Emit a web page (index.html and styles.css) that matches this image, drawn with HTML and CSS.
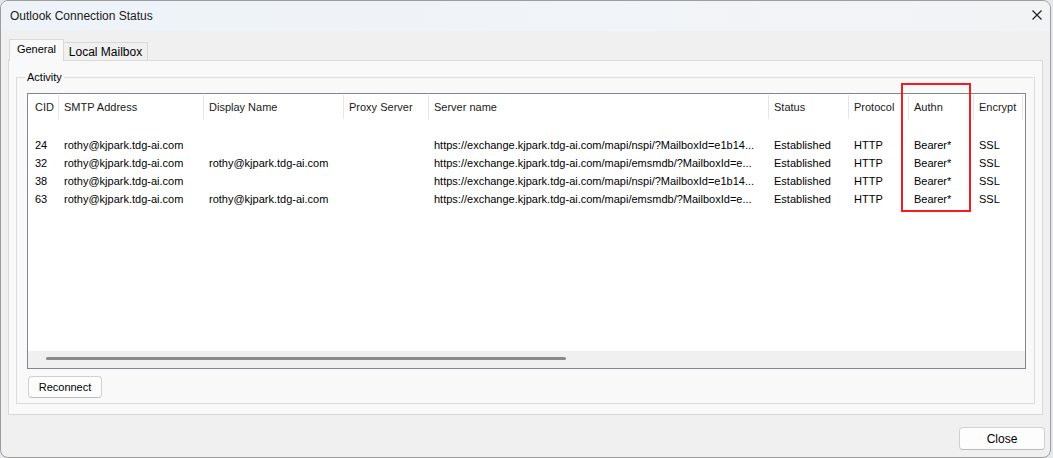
FILE: index.html
```html
<!DOCTYPE html>
<html>
<head>
<meta charset="utf-8">
<title>Outlook Connection Status</title>
<link rel="stylesheet" href="styles.css">
</head>
<body>
<div class="window">
  <div class="titlebar">
    <span class="title">Outlook Connection Status</span>
    <svg class="close-x" width="10" height="10" viewBox="0 0 10 10"><path d="M0.5 0.5 L9.5 9.5 M9.5 0.5 L0.5 9.5" stroke="#1b1b1b" stroke-width="1.1" fill="none"/></svg>
  </div>
  <div class="content">
    <div class="tabs">
      <div class="tab active">General</div>
      <div class="tab">Local Mailbox</div>
    </div>
    <div class="panel">
      <fieldset class="group">
        <legend class="legend">Activity</legend>
        <div class="listview">
          <div class="lv-row lv-header">
            <div class="hc first">CID</div>
            <div class="hc">SMTP Address</div>
            <div class="hc">Display Name</div>
            <div class="hc">Proxy Server</div>
            <div class="hc">Server name</div>
            <div class="hc">Status</div>
            <div class="hc">Protocol</div>
            <div class="hc">Authn</div>
            <div class="hc">Encrypt</div>
          </div>
          <div class="lv-body">
            <div class="lv-row item">
              <div class="c first">24</div>
              <div class="c">rothy@kjpark.tdg-ai.com</div>
              <div class="c"></div>
              <div class="c"></div>
              <div class="c">https://exchange.kjpark.tdg-ai.com/mapi/nspi/?MailboxId=e1b14...</div>
              <div class="c">Established</div>
              <div class="c">HTTP</div>
              <div class="c">Bearer*</div>
              <div class="c">SSL</div>
            </div>
            <div class="lv-row item">
              <div class="c first">32</div>
              <div class="c">rothy@kjpark.tdg-ai.com</div>
              <div class="c">rothy@kjpark.tdg-ai.com</div>
              <div class="c"></div>
              <div class="c">https://exchange.kjpark.tdg-ai.com/mapi/emsmdb/?MailboxId=e...</div>
              <div class="c">Established</div>
              <div class="c">HTTP</div>
              <div class="c">Bearer*</div>
              <div class="c">SSL</div>
            </div>
            <div class="lv-row item">
              <div class="c first">38</div>
              <div class="c">rothy@kjpark.tdg-ai.com</div>
              <div class="c"></div>
              <div class="c"></div>
              <div class="c">https://exchange.kjpark.tdg-ai.com/mapi/nspi/?MailboxId=e1b14...</div>
              <div class="c">Established</div>
              <div class="c">HTTP</div>
              <div class="c">Bearer*</div>
              <div class="c">SSL</div>
            </div>
            <div class="lv-row item">
              <div class="c first">63</div>
              <div class="c">rothy@kjpark.tdg-ai.com</div>
              <div class="c">rothy@kjpark.tdg-ai.com</div>
              <div class="c"></div>
              <div class="c">https://exchange.kjpark.tdg-ai.com/mapi/emsmdb/?MailboxId=e...</div>
              <div class="c">Established</div>
              <div class="c">HTTP</div>
              <div class="c">Bearer*</div>
              <div class="c">SSL</div>
            </div>
          </div>
          <div class="hscroll"><div class="thumb"></div></div>
        </div>
        <button class="btn reconnect">Reconnect</button>
      </fieldset>
    </div>
    <div class="footer">
      <button class="btn close">Close</button>
    </div>
  </div>
</div>
<div class="highlight"></div>
</body>
</html>
```
FILE: styles.css
```css
* { box-sizing: border-box; }
html, body { margin: 0; padding: 0; }
body {
  width: 1053px;
  height: 458px;
  background: #e6e8eb;
  font-family: "Liberation Sans", Arial, sans-serif;
  font-size: 11px;
  color: #000;
  overflow: hidden;
}
.window {
  width: 1051px;
  height: 458px;
  border: 1px solid #9d9d9d;
  border-radius: 8px;
  background: #f0f0f0;
  display: flex;
  flex-direction: column;
  overflow: hidden;
}
.titlebar {
  height: 30px;
  flex: none;
  display: flex;
  align-items: center;
  justify-content: space-between;
  padding: 0 8px 0 9px;
  background: linear-gradient(90deg, #edf3f9 0%, #f1f4f8 60%, #f2f3f5 100%);
}
.title {
  font-size: 12px;
  color: #1a1a1a;
  line-height: 14px;
  margin-top: -1px;
}
.close-x { display: block; margin-top: -2px; }
.content {
  flex: 1;
  display: flex;
  flex-direction: column;
  padding: 8px 7px 0 7px;
}
.tabs {
  height: 21px;
  display: flex;
  align-items: flex-end;
  padding-left: 1px;
  flex: none;
}
.tab {
  border: 1px solid #d9d9d9;
  border-bottom: none;
  text-align: center;
  color: #000;
}
.tab.active {
  width: 55px;
  height: 22px;
  margin-bottom: -1px;
  background: #f9f9f9;
  position: relative;
  z-index: 1;
  line-height: 19px;
  font-size: 11px;
}
.tab:not(.active) {
  width: 85px;
  height: 18px;
  margin-left: -1px;
  background: #f0f0f0;
  font-size: 12px;
  line-height: 18px;
}
.panel {
  height: 355px;
  flex: none;
  border: 1px solid #d9d9d9;
  background: #f9f9f9;
  padding: 9px 7px 10px 7px;
}
.group {
  margin: 0;
  border: 1px solid #dcdcdc;
  padding: 9px 8px 5px 10px;
  min-width: 0;
  height: 334px;
}
.legend {
  padding: 0 2px;
  margin-left: -2px;
  line-height: 14px;
  font-size: 11px;
  color: #000;
}
.listview {
  width: 999px;
  height: 276px;
  border: 1px solid #828790;
  background: #fff;
  display: flex;
  flex-direction: column;
}
.lv-row {
  display: grid;
  grid-template-columns: 31px 145px 140px 85px 340px 80px 60px 65px 49px;
}
.lv-header {
  height: 26px;
  flex: none;
}
.hc {
  margin: 1px 0 1px;
  height: 24px;
  line-height: 24px;
  border-right: 1px solid #e5e5e5;
  padding-left: 5px;
  white-space: nowrap;
  overflow: hidden;
  color: #1a1a1a;
}
.hc.first, .c.first { padding-left: 7px; }
.lv-body {
  flex: 1;
  padding-top: 16px;
}
.item { height: 18px; }
.c {
  line-height: 18px;
  padding-left: 5px;
  white-space: nowrap;
  overflow: hidden;
  color: #000;
}
.hscroll {
  height: 17px;
  flex: none;
  background: #f0f0f0;
  padding: 6px 0 0 18px;
}
.thumb {
  width: 520px;
  height: 3px;
  border-radius: 2px;
  background: #8a8a8a;
}
.btn {
  font-family: "Liberation Sans", Arial, sans-serif;
  background: #fdfdfd;
  border: 1px solid #d0d0d0;
  border-bottom-color: #bcbcbc;
  border-radius: 4px;
  color: #000;
  padding: 0;
  display: block;
}
.reconnect {
  width: 74px;
  height: 22px;
  margin: 7px 0 0 1px;
  font-size: 11px;
}
.footer {
  flex: 1;
  display: flex;
  justify-content: flex-end;
  align-items: flex-start;
  padding: 12px 0 0 0;
  margin-right: -2px;
}
.close {
  width: 86px;
  height: 23px;
  font-size: 12px;
}
.highlight {
  position: absolute;
  left: 901px;
  top: 83px;
  width: 70px;
  height: 129px;
  border: 2px solid #f41c1c;
}
```
